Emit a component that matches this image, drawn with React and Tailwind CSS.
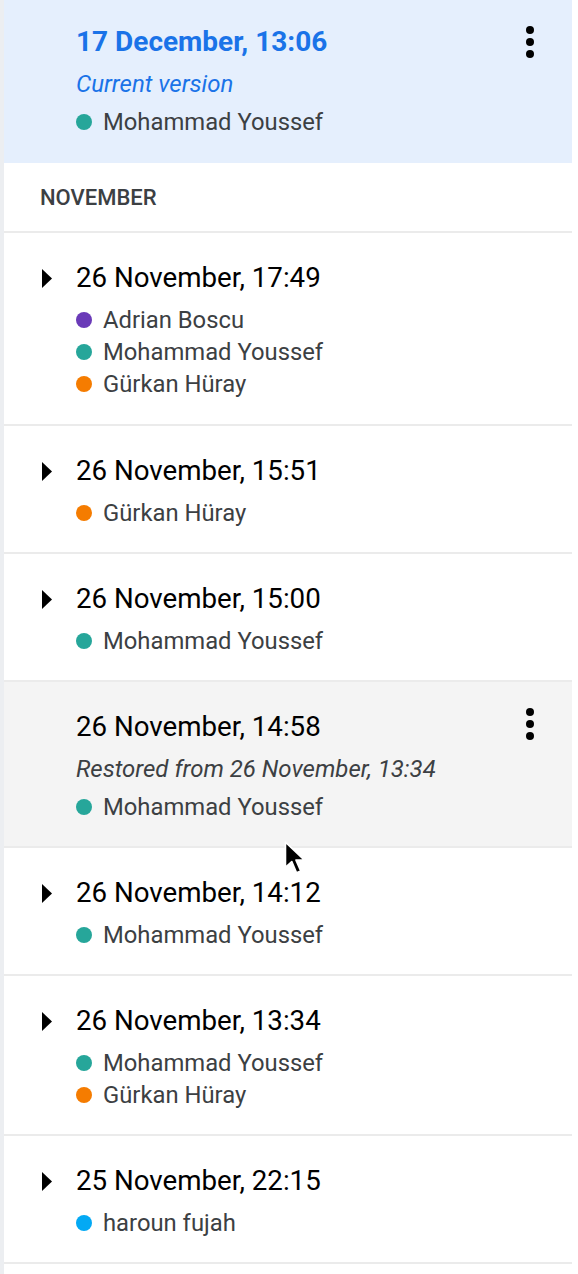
import React from "react";

const COLORS = {
  purple: "bg-[#6a3ab8]",
  teal: "bg-[#26a69a]",
  orange: "bg-[#f57c00]",
  blue: "bg-[#03a9f4]",
};

function Person({ color, name, className = "" }) {
  return (
    <div className={`flex items-center gap-[11px] h-8 ${className}`}>
      <span className={`w-4 h-4 rounded-full ${color} shrink-0`} />
      <span className="text-[23.8px] leading-8 text-[#3c4043]">{name}</span>
    </div>
  );
}

function MoreVert() {
  return (
    <svg width="48" height="48" viewBox="0 0 24 24" className="absolute right-[18px] top-[18px]">
      <circle cx="12" cy="6" r="2" fill="#000" />
      <circle cx="12" cy="12" r="2" fill="#000" />
      <circle cx="12" cy="18" r="2" fill="#000" />
    </svg>
  );
}

function Arrow() {
  return (
    <svg width="10" height="19" viewBox="0 0 10 19" className="absolute left-[38px] top-[36px]">
      <path d="M0 0 L10 9.5 L0 19 Z" fill="#000" />
    </svg>
  );
}

function Entry({ title, people, expandable = true, note, hovered = false, first = false }) {
  return (
    <div
      className={`relative pl-[72px] pr-4 pt-[29px] ${first ? "pb-6" : "pb-[23px]"} border-b-2 border-[#ebebeb] ${
        hovered ? "bg-[#f4f4f4]" : "bg-white"
      }`}
    >
      {expandable && <Arrow />}
      {hovered && <MoreVert />}
      <div className="text-[27.7px] leading-8 text-black">{title}</div>
      {note && (
        <div className="mt-[10px] text-[24px] leading-8 italic text-[#3c4043]">{note}</div>
      )}
      <div className={note ? "mt-[6px]" : "mt-[10px]"}>
        {people.map((p, i) => (
          <Person key={i} color={p.color} name={p.name} />
        ))}
      </div>
    </div>
  );
}

function Cursor() {
  return (
    <svg
      width="26"
      height="38"
      viewBox="0 0 24 36"
      className="absolute left-[283px] top-[840px] pointer-events-none"
    >
      <path
        d="M2 2 L2 26 L8 20.5 L12.5 31 L16.5 29.3 L12 19 L20 19 Z"
        fill="#000"
        stroke="#fff"
        strokeWidth="1.6"
        strokeLinejoin="round"
      />
    </svg>
  );
}

export default function App() {
  const MY = { color: COLORS.teal, name: "Mohammad Youssef" };
  const AB = { color: COLORS.purple, name: "Adrian Boscu" };
  const GH = { color: COLORS.orange, name: "Gürkan Hüray" };
  const HF = { color: COLORS.blue, name: "haroun fujah" };

  return (
    <div
      className="relative w-[578px] min-h-[1274px] bg-white"
      style={{ fontFamily: "Roboto, 'Noto Sans', Arial, sans-serif" }}
    >
      <div className="w-[572px] min-h-[1274px] border-l-4 border-[#eceef1] bg-white">
        <div className="relative bg-[#e5effd] pl-[72px] pt-[26px] pb-[25px]">
          <MoreVert />
          <div className="text-[28px] leading-8 font-bold text-[#1a73e8]">
            17 December, 13:06
          </div>
          <div className="mt-[10px] text-[24px] leading-8 italic text-[#1a73e8]">
            Current version
          </div>
          <Person color={COLORS.teal} name="Mohammad Youssef" className="mt-[6px]" />
        </div>
        <div className="pl-[36px] pt-[19px] pb-[17px] border-b-2 border-[#ebebeb]">
          <div className="text-[22px] leading-8 font-medium text-[#3c4043]">NOVEMBER</div>
        </div>
        <Entry title="26 November, 17:49" people={[AB, MY, GH]} first />
        <Entry title="26 November, 15:51" people={[GH]} />
        <Entry title="26 November, 15:00" people={[MY]} />
        <Entry
          title="26 November, 14:58"
          people={[MY]}
          expandable={false}
          hovered
          note="Restored from 26 November, 13:34"
        />
        <Entry title="26 November, 14:12" people={[MY]} />
        <Entry title="26 November, 13:34" people={[MY, GH]} />
        <Entry title="25 November, 22:15" people={[HF]} />
      </div>
      <Cursor />
    </div>
  );
}
